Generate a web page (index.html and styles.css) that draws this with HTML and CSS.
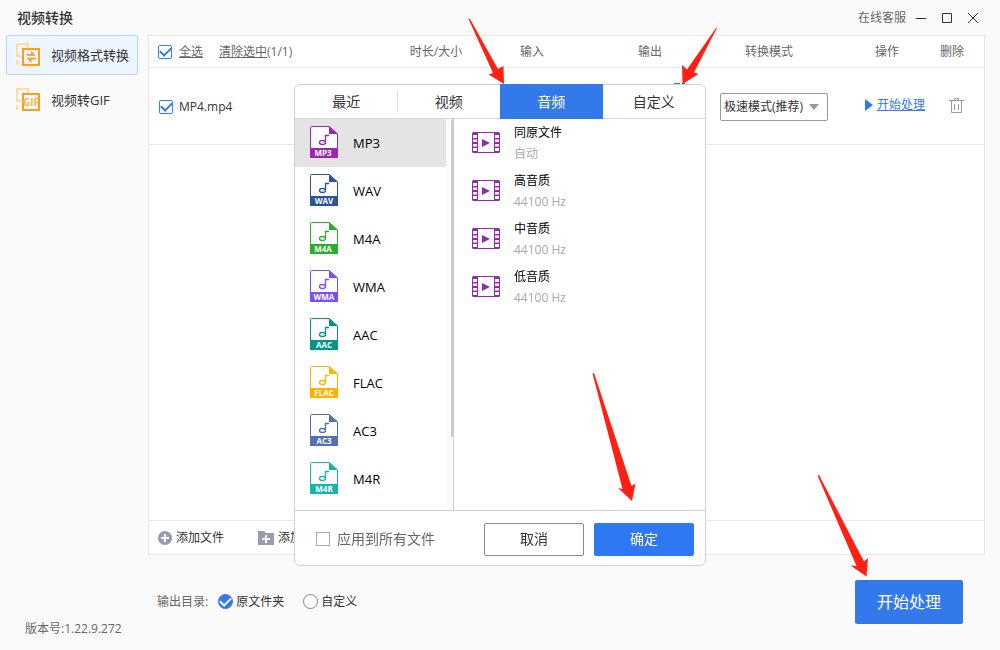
FILE: index.html
```html
<!DOCTYPE html>
<html lang="zh-CN">
<head>
<meta charset="utf-8">
<meta name="viewport" content="width=device-width, initial-scale=1">
<title>视频转换</title>
<link rel="stylesheet" href="styles.css">
</head>
<body>
<svg class="defs" aria-hidden="true">
  <symbol id="file" viewBox="0 0 28 32">
    <path d="M1.5.5H19L27.5 8V31.5H.5V1.5Q.5.5 1.5.5Z" fill="#fff" stroke="currentColor"/>
    <path d="M19 0L28 8H19Z" fill="currentColor"/>
    <path d="M0 22H28V31Q28 32 27 32H1Q0 32 0 31Z" fill="currentColor"/>
    <path d="M19 9.500H15.500V16" fill="none" stroke="currentColor" stroke-width="1.300"/>
    <ellipse cx="12.500" cy="16.500" rx="3" ry="2" fill="none" stroke="currentColor" stroke-width="1.300"/>
  </symbol>
  <symbol id="film" viewBox="0 0 28 21">
    <rect width="28" height="21" rx="1.500" fill="#9c27b0"/>
    <path d="M6 1H22V20H6Z" fill="#fff"/>
    <path d="M1 3H5V6H1ZM1 7.500H5V10H1ZM1 12H5V14.500H1ZM1 16H5V19H1ZM23 3H27V6H23ZM23 7.500H27V10H23ZM23 12H27V14.500H23ZM23 16H27V19H23Z" fill="#fff"/>
    <path d="M10 7L18 11L10 15Z" fill="#9c27b0"/>
  </symbol>
  <symbol id="frames" viewBox="0 0 24 24">
    <path d="M5 13H1V1H12V5" fill="none" stroke="#ffdca4" stroke-width="2"/>
    <path d="M0 16.500L4 19.500L0 22.500Z" fill="#ffdca4"/>
    <rect x="7" y="6" width="16" height="16" fill="none" stroke="#fb9f14" stroke-width="2"/>
  </symbol>
</svg>

<header class="titlebar">
  <h1>视频转换</h1>
  <a class="service" href="#">在线客服</a>
  <div class="window-buttons">
    <button type="button" aria-label="最小化"><svg width="12" height="12"><path d="M1 6.500H11"/></svg></button>
    <button type="button" aria-label="最大化"><svg width="12" height="12"><path d="M1.500 1.500H10.500V10.500H1.500Z"/></svg></button>
    <button type="button" aria-label="关闭"><svg width="12" height="12"><path d="M1 1L11 11M11 1L1 11"/></svg></button>
  </div>
</header>

<div class="workspace">
  <nav class="sidebar">
    <a class="nav-item active" href="#">
      <svg width="24" height="24"><use href="#frames"/><path d="M15 8L20 12.800H10.500V11H15ZM20 14.800V16.500H15.500V20L10.500 14.800Z" fill="#fb9f14"/></svg>
      视频格式转换
    </a>
    <a class="nav-item" href="#">
      <svg width="24" height="24"><use href="#frames"/><text class="gif" x="15" y="18" text-anchor="middle">GIF</text></svg>
      视频转GIF
    </a>
    <p class="version">版本号:1.22.9.272</p>
  </nav>

  <main class="content">
    <section class="panel">
      <table class="files">
        <colgroup><col><col class="c-duration"><col class="c-input"><col class="c-output"><col class="c-mode"><col class="c-action"><col class="c-delete"></colgroup>
        <thead>
          <tr>
            <th class="name"><div class="select-row"><input class="check" type="checkbox" id="all" checked><label class="linked" for="all">全选</label><span class="clear"><a class="linked" href="#">清除选中</a>(1/1)</span></div></th>
            <th>时长/大小</th><th>输入</th><th>输出</th><th class="mode">转换模式</th><th>操作</th><th class="delete">删除</th>
          </tr>
        </thead>
        <tbody>
          <tr>
            <td class="name"><div class="file-row"><input class="check" type="checkbox" id="file1" checked><label for="file1">MP4.mp4</label></div></td>
            <td></td><td></td>
            <td class="output"><svg width="12" height="12"><path d="M0 0H7V1H0ZM0 0V12H11V7H10V11H1V0ZM9 0H12V3L6 9H4V7Z" fill="#3479e9"/></svg></td>
            <td class="mode"><select aria-label="转换模式"><option>极速模式(推荐)</option></select></td>
            <td class="action"><a class="start-link" href="#"><svg width="8" height="12"><path d="M0 0L8 6L0 12Z" fill="#3479e9"/></svg><span>开始处理</span></a></td>
            <td class="trash"><button type="button" aria-label="删除"><svg width="15" height="16"><path d="M0 2.500H15M5.500 2V.5H9.500V2M2.500 3V14.500H12.500V3M5.500 6V12M9.500 6V12" fill="none" stroke="#999"/></svg></button></td>
          </tr>
        </tbody>
      </table>
      <div class="add-bar">
        <button type="button"><svg width="14" height="14"><circle cx="7" cy="7" r="7" fill="#979db0"/><path d="M7 3V11M3 7H11" stroke="#fff" stroke-width="2"/></svg>添加文件</button>
        <button type="button"><svg width="16" height="14"><path d="M0 0H6L8 2H16V14H0Z" fill="#979db0"/><path d="M8 4V12M4 8H12" stroke="#fff" stroke-width="2"/></svg>添加文件夹</button>
      </div>
    </section>
    <footer class="output-bar">
      <div class="directory" role="radiogroup" aria-label="输出目录">
        <span class="caption">输出目录:</span>
        <label><input type="radio" name="dir" checked>原文件夹</label>
        <label><input type="radio" name="dir">自定义</label>
      </div>
      <button class="start" type="button">开始处理</button>
    </footer>
  </main>
</div>

<div class="format-dialog" role="dialog" aria-label="输出格式">
  <div class="tabs" role="tablist">
    <button type="button" role="tab">最近</button>
    <button type="button" role="tab">视频</button>
    <button type="button" role="tab" class="active" aria-selected="true">音频</button>
    <button type="button" role="tab">自定义</button>
  </div>
  <div class="dialog-body">
    <ul class="formats">
      <li class="mp3 selected"><svg width="28" height="32"><use href="#file"/><text x="13" y="30">MP3</text></svg>MP3</li>
      <li class="wav"><svg width="28" height="32"><use href="#file"/><text x="14" y="30">WAV</text></svg>WAV</li>
      <li class="m4a"><svg width="28" height="32"><use href="#file"/><text x="13" y="30">M4A</text></svg>M4A</li>
      <li class="wma"><svg width="28" height="32"><use href="#file"/><text x="14" y="30">WMA</text></svg>WMA</li>
      <li class="aac"><svg width="28" height="32"><use href="#file"/><text x="14" y="30">AAC</text></svg>AAC</li>
      <li class="flac"><svg width="28" height="32"><use href="#file"/><text x="14" y="30">FLAC</text></svg>FLAC</li>
      <li class="ac3"><svg width="28" height="32"><use href="#file"/><text x="14" y="30">AC3</text></svg>AC3</li>
      <li class="m4r"><svg width="28" height="32"><use href="#file"/><text x="14" y="30">M4R</text></svg>M4R</li>
    </ul>
    <div class="scrollbar"><div class="thumb"></div></div>
    <ul class="qualities">
      <li><svg width="28" height="21"><use href="#film"/></svg><div><strong>同原文件</strong><small>自动</small></div></li>
      <li><svg width="28" height="21"><use href="#film"/></svg><div><strong>高音质</strong><small>44100 Hz</small></div></li>
      <li><svg width="28" height="21"><use href="#film"/></svg><div><strong>中音质</strong><small>44100 Hz</small></div></li>
      <li><svg width="28" height="21"><use href="#film"/></svg><div><strong>低音质</strong><small>44100 Hz</small></div></li>
    </ul>
  </div>
  <div class="dialog-footer">
    <label class="apply"><input class="check" type="checkbox">应用到所有文件</label>
    <button class="cancel" type="button">取消</button>
    <button class="confirm" type="button">确定</button>
  </div>
</div>

<svg class="arrows" viewBox="0 0 1000 650" aria-hidden="true">
  <path d="M468.500 19L470 19L498 69L503.500 66L504 84L488.500 74.500L493 73Z"/>
  <path d="M717 28L716 28L687 69.500L682 65L682.500 84L698.500 74L694 72.500Z"/>
  <path d="M592.500 373.500L594 373L631.500 486L635.500 483.500L632 501L618 488L622.500 489Z"/>
  <path d="M817.500 475.500L819 475L864 561.500L868 558L866.500 576.500L850.500 565.500L856.500 566Z"/>
</svg>
</body>
</html>
```
FILE: styles.css
```css
* { box-sizing: border-box; }

body {
  margin: 0;
  min-height: 100vh;
  display: flex;
  flex-direction: column;
  background: #fafafa;
  color: #333;
  font: 12px/18px "Open Sans", "Noto Sans CJK SC", sans-serif;
}

button, select, input { font: inherit; color: inherit; margin: 0; }
button { padding: 0; border: 0; background: none; cursor: pointer; }
a { color: inherit; text-decoration: none; }
ul { margin: 0; padding: 0; list-style: none; }
svg { flex: none; display: block; }
.defs { position: absolute; width: 0; height: 0; }

.titlebar {
  height: 35px;
  display: flex;
  align-items: center;
  padding: 0 21px 0 17px;
}
.titlebar h1 { margin: 0 auto 0 0; font-size: 14px; font-weight: 500; }
.service { color: #666; }
.window-buttons { display: flex; gap: 14px; margin-left: 9px; }
.window-buttons path { fill: none; stroke: #333; }

.workspace {
  flex: 1;
  display: grid;
  grid-template-columns: 148px 1fr;
}

.sidebar {
  display: flex;
  flex-direction: column;
  gap: 5px;
  padding: 0 10px 12px 6px;
}
.nav-item {
  height: 40px;
  display: flex;
  align-items: center;
  gap: 11px;
  padding: 0 0 0 9px;
  border: 1px solid transparent;
  border-radius: 2px;
  font-size: 13px;
  white-space: nowrap;
}
.nav-item.active { background: #edf5ff; border-color: #b5d4fb; }
.gif { font: 700 10px "Open Sans", sans-serif; fill: #fdb34a; }
.version { margin: auto 0 0; padding-left: 19px; color: #666; }

.content {
  display: flex;
  flex-direction: column;
  padding-right: 15px;
}
.panel {
  flex: 1;
  display: flex;
  flex-direction: column;
  background: #fff;
  border: 1px solid #e8e8e8;
}

.files { width: 100%; table-layout: fixed; border-collapse: separate; border-spacing: 0; }
.c-duration { width: 84px; }
.c-input { width: 108px; }
.c-output { width: 128px; }
.c-mode { width: 131px; }
.c-action { width: 84px; }
.c-delete { width: 55px; }
.files th, .files td { padding: 0; border-bottom: 1px solid #e8e8e8; }
.files th { height: 32px; font-weight: 400; color: #666; }
.files td { height: 77px; }
.files th.mode { text-align: left; padding-left: 31px; }
.files th.delete { padding-right: 9px; }
.select-row, .file-row { display: flex; align-items: center; gap: 7px; padding-left: 9px; }
.file-row { padding: 2px 0 0 10px; gap: 6px; }
.linked { text-decoration: underline; }
.clear { margin-left: 9px; }

.check {
  appearance: none;
  flex: none;
  display: grid;
  place-items: center;
  width: 14px;
  height: 14px;
  border: 1px solid #aaa;
  background: #fff;
}
.check:checked { border-color: #2f80f5; border-radius: 2px; }
.check:checked::after {
  content: "";
  width: 9px;
  height: 5px;
  margin-bottom: 3px;
  border: solid #3479e9;
  border-width: 0 0 2px 2px;
  transform: rotate(-45deg);
}

.files td.output { vertical-align: top; padding: 15px 0 0 87px; }
.files td.mode { padding: 2px 0 0 6px; }
select {
  display: block;
  appearance: none;
  width: 108px;
  height: 28px;
  padding: 0 0 0 3px;
  border: 1px solid #999;
  border-radius: 2px;
  background: #fff url("data:image/svg+xml,%3Csvg xmlns='http://www.w3.org/2000/svg' width='10' height='6'%3E%3Cpath d='M0 0H10L5 6Z' fill='%23999'/%3E%3C/svg%3E") no-repeat right 8px center;
}
.start-link {
  display: flex;
  align-items: center;
  gap: 4px;
  margin-left: 20px;
  padding-bottom: 2px;
  color: #3479e9;
}
.start-link span { text-decoration: underline; }
.trash button { display: block; margin: 0 auto; }

.add-bar {
  height: 34px;
  margin-top: auto;
  display: flex;
  align-items: center;
  gap: 34px;
  padding-left: 9px;
  border-top: 1px solid #e8e8e8;
}
.add-bar button { display: flex; align-items: center; gap: 4px; }

.output-bar {
  height: 95px;
  display: flex;
  align-items: center;
  justify-content: space-between;
  padding: 0 22px 2px 9px;
}
.directory, .directory label { display: flex; align-items: center; }
.directory label { gap: 3px; margin-right: 19px; }
.caption { color: #666; margin-right: 10px; }
input[type="radio"] {
  appearance: none;
  display: grid;
  place-items: center;
  width: 15px;
  height: 15px;
  border: 1px solid #888;
  border-radius: 50%;
  background: #fff;
}
input[type="radio"]:checked { border-color: #3479e9; background: #3479e9; }
input[type="radio"]:checked::after {
  content: "";
  width: 9px;
  height: 5px;
  margin-bottom: 3px;
  border: solid #fff;
  border-width: 0 0 2px 2px;
  transform: rotate(-45deg);
}
.start {
  width: 108px;
  height: 44px;
  border-radius: 2px;
  background: #3479e9;
  color: #fff;
  font-size: 16px;
}

.format-dialog {
  position: fixed;
  inset: 0;
  margin: auto;
  width: 412px;
  height: 482px;
  display: flex;
  flex-direction: column;
  background: #fff;
  border: 1px solid #d0d0d0;
  border-radius: 6px;
}
.tabs {
  display: grid;
  grid-template-columns: repeat(4, 1fr);
  height: 34px;
  border-bottom: 1px solid #d6d6d6;
}
.tabs button {
  display: flex;
  align-items: center;
  justify-content: center;
  font-size: 14px;
}
.tabs button:first-child { background: linear-gradient(#e4e4e4, #e4e4e4) no-repeat right center / 1px 23px; }
.tabs .active { background: #3479e9; color: #fff; margin: -1px 0; }

.dialog-body { flex: 1; display: flex; min-height: 0; }
.formats { width: 151px; overflow: hidden; }
.formats li {
  height: 48px;
  display: flex;
  align-items: center;
  gap: 15px;
  padding-left: 15px;
  font-size: 13px;
  color: #000;
}
.formats .selected { background: #e4e4e4; }
.formats svg, .qualities svg { margin-bottom: 2px; }
.formats text { font: 700 8px "Open Sans", sans-serif; fill: #fff; text-anchor: middle; }
.mp3 svg { color: #9c27b0; }
.wav svg { color: #2a5699; }
.m4a svg { color: #2bae2e; }
.wma svg { color: #7c4dff; }
.aac svg { color: #009688; }
.flac svg { color: #ffb300; }
.ac3 svg { color: #5270b5; }
.m4r svg { color: #16b5ac; }

.scrollbar { width: 8px; background: #fafafa; border-right: 1px solid #d0d0d0; }
.thumb { width: 3px; height: 318px; margin-left: 5px; border-radius: 2px; background: #c8cbd0; }

.qualities { flex: 1; padding-left: 18px; }
.qualities li { height: 48px; display: flex; align-items: center; gap: 14px; }
.qualities strong, .qualities small { display: block; font-weight: 400; font-size: 12px; line-height: 21px; }
.qualities strong { color: #000; }
.qualities small { color: #aaa; }

.dialog-footer {
  height: 55px;
  display: flex;
  align-items: center;
  gap: 10px;
  padding: 2px 11px 0 21px;
  border-top: 1px solid #d0d0d0;
  font-size: 14px;
}
.dialog-footer button { width: 100px; height: 33px; border-radius: 2px; }
.apply { display: flex; align-items: center; gap: 7px; margin-right: auto; color: #666; }
.dialog-footer .cancel { border: 1px solid #888; }
.dialog-footer .confirm { background: #2f78f4; color: #fff; }

.arrows {
  position: fixed;
  inset: 0;
  width: 100%;
  height: 100%;
  pointer-events: none;
  fill: #ff2013;
}
```
